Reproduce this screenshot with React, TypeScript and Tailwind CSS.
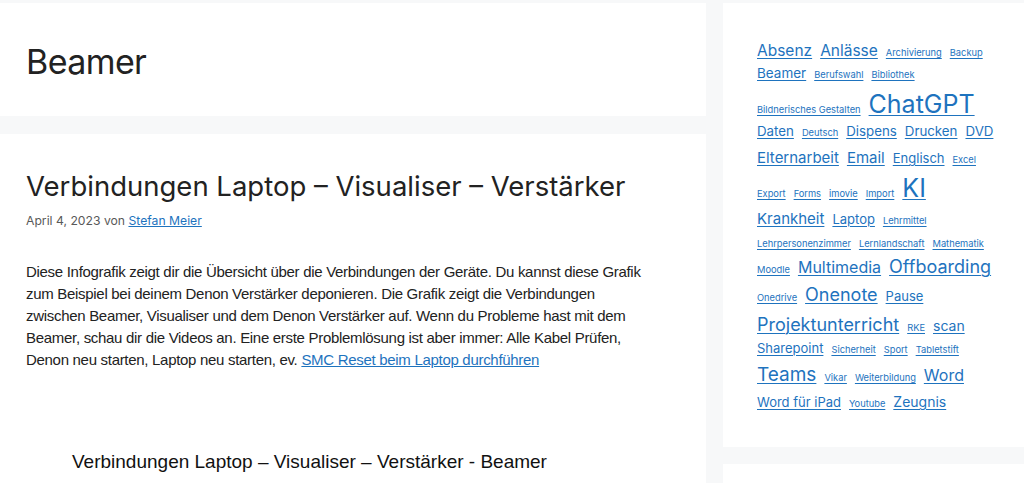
import React from "react";

type Tag = { t: string; s: number };

const rows: { h: number; tags: Tag[] }[] = [
  { h: 24, tags: [{ t: "Absenz", s: 15.5 }, { t: "Anlässe", s: 15.5 }, { t: "Archivierung", s: 9.3 }, { t: "Backup", s: 9.3 }] },
  { h: 25, tags: [{ t: "Beamer", s: 13.5 }, { t: "Berufswahl", s: 9.3 }, { t: "Bibliothek", s: 9.3 }] },
  { h: 33, tags: [{ t: "Bildnerisches Gestalten", s: 9.3 }, { t: "ChatGPT", s: 25 }] },
  { h: 25, tags: [{ t: "Daten", s: 13.3 }, { t: "Deutsch", s: 9.3 }, { t: "Dispens", s: 13.3 }, { t: "Drucken", s: 13.3 }, { t: "DVD", s: 13.3 }] },
  { h: 26, tags: [{ t: "Elternarbeit", s: 15 }, { t: "Email", s: 15 }, { t: "Englisch", s: 13 }, { t: "Excel", s: 9.3 }] },
  { h: 35, tags: [{ t: "Export", s: 9.3 }, { t: "Forms", s: 9.3 }, { t: "imovie", s: 9.3 }, { t: "Import", s: 9.3 }, { t: "KI", s: 25 }] },
  { h: 28, tags: [{ t: "Krankheit", s: 15 }, { t: "Laptop", s: 13 }, { t: "Lehrmittel", s: 9.3 }] },
  { h: 19, tags: [{ t: "Lehrpersonenzimmer", s: 9.3 }, { t: "Lernlandschaft", s: 9.3 }, { t: "Mathematik", s: 9.3 }] },
  { h: 28, tags: [{ t: "Moodle", s: 9.3 }, { t: "Multimedia", s: 16 }, { t: "Offboarding", s: 18 }] },
  { h: 30, tags: [{ t: "Onedrive", s: 9.3 }, { t: "Onenote", s: 18 }, { t: "Pause", s: 13 }] },
  { h: 26, tags: [{ t: "Projektunterricht", s: 18 }, { t: "RKE", s: 9.3 }, { t: "scan", s: 14 }] },
  { h: 23, tags: [{ t: "Sharepoint", s: 13 }, { t: "Sicherheit", s: 9.3 }, { t: "Sport", s: 9.3 }, { t: "Tabletstift", s: 9.3 }] },
  { h: 30, tags: [{ t: "Teams", s: 19 }, { t: "Vikar", s: 9.3 }, { t: "Weiterbildung", s: 9.3 }, { t: "Word", s: 16 }] },
  { h: 14, tags: [{ t: "Word für iPad", s: 13 }, { t: "Youtube", s: 9.3 }, { t: "Zeugnis", s: 14 }] },
];

const sizeClass: Record<number, string> = {
  9.3: "text-[9.3px]",
  13: "text-[13px]",
  13.3: "text-[13.3px]",
  13.5: "text-[13.5px]",
  14: "text-[14px]",
  15: "text-[15px]",
  15.5: "text-[15.5px]",
  16: "text-[16px]",
  18: "text-[18px]",
  19: "text-[19px]",
  25: "text-[25px]",
};

export default function App() {
  return (
    <div className="w-[1024px] h-[483px] overflow-hidden bg-[#f7f8f9] pt-[3px] font-['Inter',sans-serif] text-[#222222]">
      <div className="flex gap-[17px] items-start">
        <div className="w-[706px] flex flex-col gap-[18px]">
          <div className="bg-white h-[113px] pl-[26px] pt-[42px]">
            <h1 className="text-[34px] leading-none font-normal tracking-[-0.6px]">Beamer</h1>
          </div>
          <div className="bg-white h-[400px] pl-[26px] pr-[40px] pt-[39px]">
            <h2 className="text-[27.5px] leading-none font-normal">
              Verbindungen Laptop – Visualiser – Verstärker
            </h2>
            <div className="mt-[14px] text-[12.2px] leading-none text-[#595959]">
              April 4, 2023 von{" "}
              <a className="text-[#1e73be] underline">Stefan Meier</a>
            </div>
            <p className="mt-[34px] text-[15px] leading-[22px] tracking-[-0.3px] font-['Liberation_Sans',sans-serif] w-[620px]">
              Diese Infografik zeigt dir die Übersicht über die Verbindungen der Geräte. Du kannst diese Grafik zum
              Beispiel bei deinem Denon Verstärker deponieren. Die Grafik zeigt die Verbindungen zwischen Beamer,
              Visualiser und dem Denon Verstärker auf. Wenn du Probleme hast mit dem Beamer, schau dir die Videos an.
              Eine erste Problemlösung ist aber immer: Alle Kabel Prüfen, Denon neu starten, Laptop neu starten, ev.{" "}
              <a className="text-[#1e73be] underline">SMC Reset beim Laptop durchführen</a>
            </p>
            <div className="mt-[81px] pl-[46px] text-[19px] leading-none font-['Liberation_Sans',sans-serif] text-[#111]">
              Verbindungen Laptop – Visualiser – Verstärker - Beamer
            </div>
          </div>
        </div>
        <div className="flex-1 flex flex-col gap-[17px]">
          <div className="bg-white h-[444px] pl-[34px] pr-[20px] pt-[40px]">
            {rows.map((r, i) => (
              <div
                key={i}
                className="flex items-baseline gap-x-[8px] leading-none whitespace-nowrap"
                style={{ height: r.h }}
              >
                {r.tags.map((tag) => (
                  <a
                    key={tag.t}
                    className={`${sizeClass[tag.s]} text-[#1e73be] underline decoration-1 underline-offset-2`}
                  >
                    {tag.t}
                  </a>
                ))}
              </div>
            ))}
          </div>
          <div className="bg-white h-[40px]" />
        </div>
      </div>
    </div>
  );
}
